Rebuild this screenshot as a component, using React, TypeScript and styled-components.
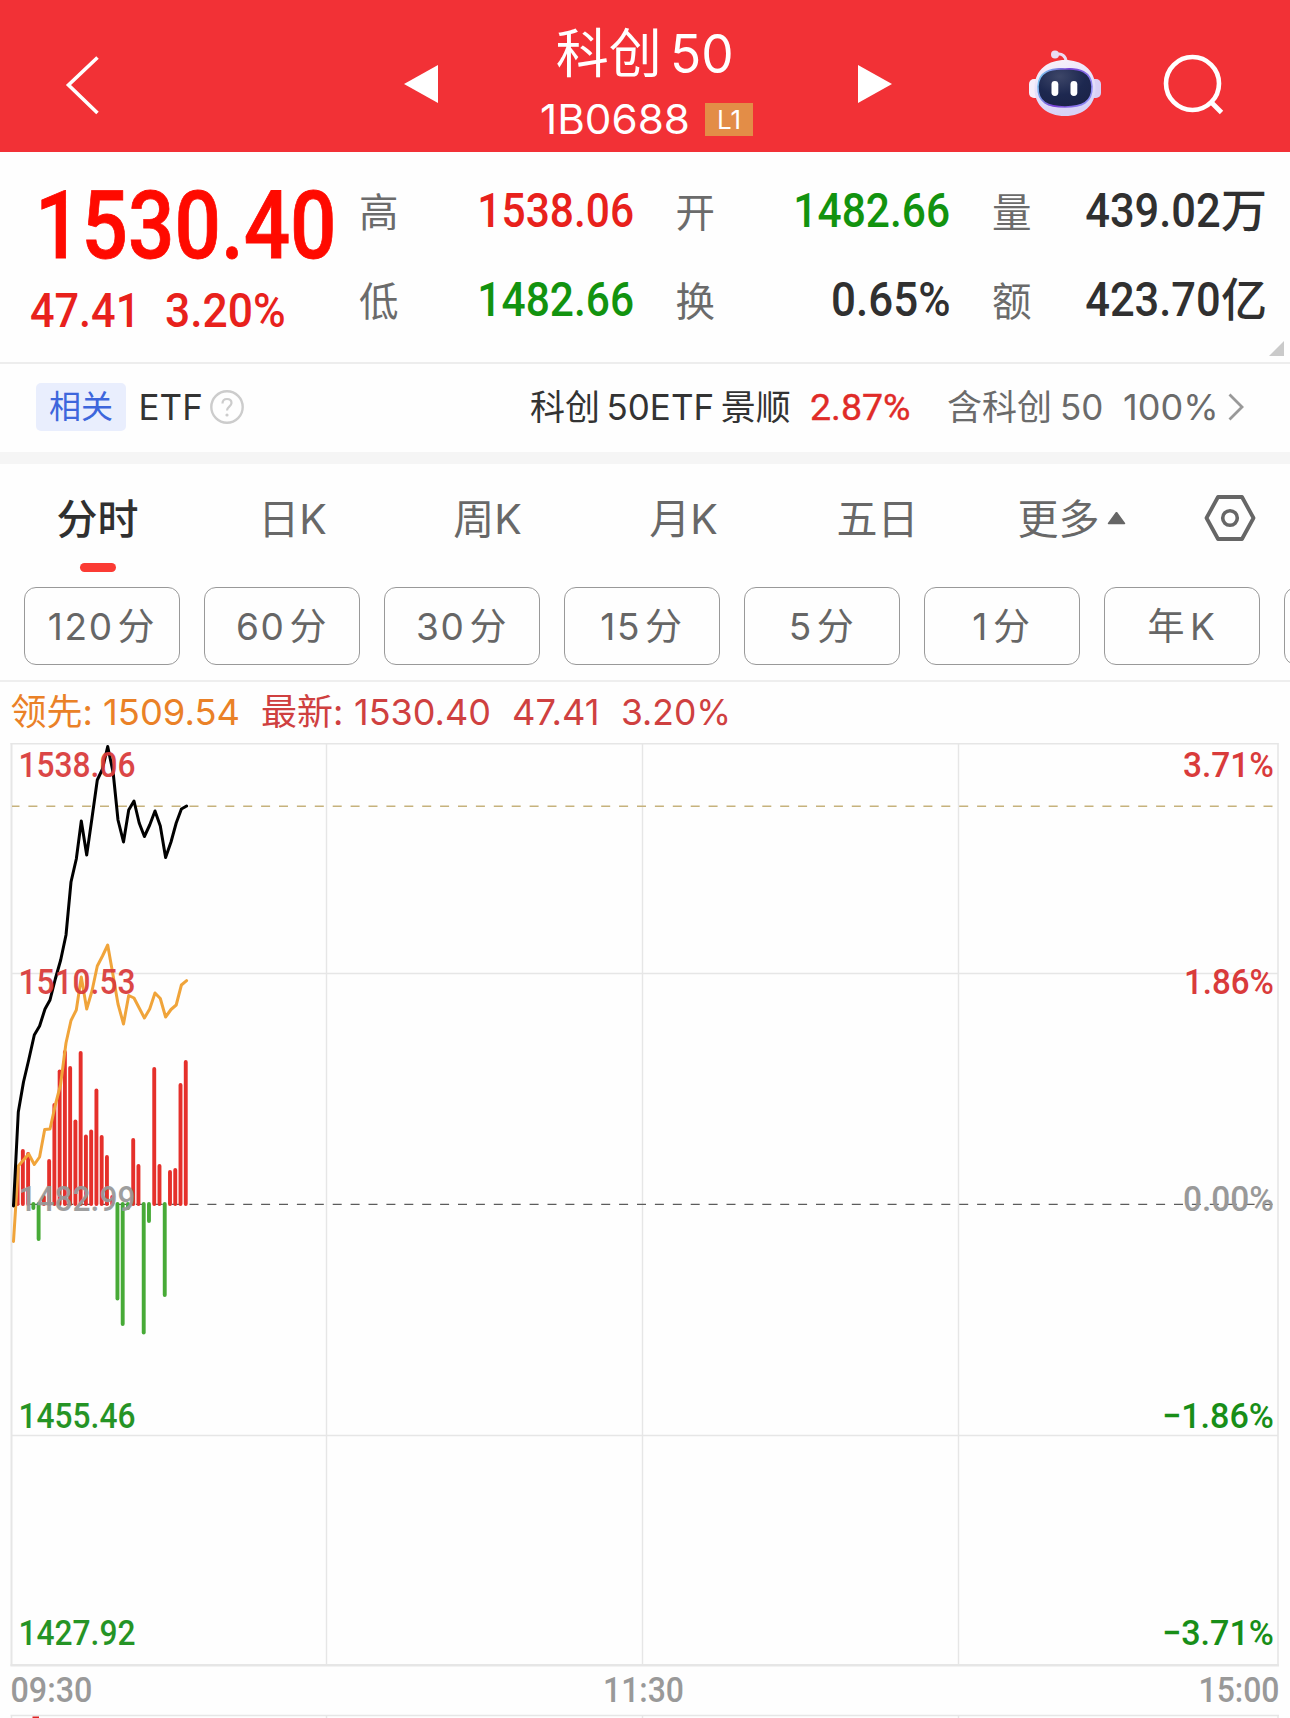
import React from "react";
import styled, { createGlobalStyle } from "styled-components";

const latin = `Inter, "Noto Sans CJK SC", sans-serif`;
const numeric = `Roboto, "Noto Sans CJK SC", sans-serif`;

const GlobalStyle = createGlobalStyle`
  *, *::before, *::after { box-sizing: border-box; }
  body {
    margin: 0;
    background: #fff;
    font-family: ${latin};
    font-variant-ligatures: none;
    overflow: hidden;
  }
  svg { display: block; }
`;

const Screen = styled.main`
  width: 1290px;
  height: 1718px;
  overflow: hidden;
  display: flex;
  flex-direction: column;
  background: #fefefe;
`;

/* Condensed lettering: squeezes glyphs horizontally, anchored on one side. */
const Squeeze = styled.span<{ $x: number; $from?: "left" | "right" | "center" }>`
  display: inline-block;
  white-space: pre;
  transform: scaleX(${(p) => p.$x});
  transform-origin: ${(p) => p.$from ?? "left"} center;
`;

/* ---------- header ---------- */

const Header = styled.header`
  height: 152px;
  flex: none;
  display: grid;
  grid-template-columns: 404px 34px 420px 34px 137px 72px 62px 1fr;
  align-items: start;
  background: #f23136;
  color: #fff;
`;

const IconSlot = styled.div<{ $top: number; $left?: number }>`
  padding: ${(p) => p.$top}px 0 0 ${(p) => p.$left ?? 0}px;
`;

const TitleBlock = styled.div`
  display: flex;
  flex-direction: column;
  align-items: center;
  padding: 27px 3px 0 0;
`;

const Title = styled.h1`
  margin: 0;
  padding-right: 2px;
  display: flex;
  gap: 8px;
  font-size: 53px;
  font-weight: 400;
  line-height: 54px;
`;

const CodeRow = styled.div`
  display: flex;
  align-items: center;
  margin-top: 16px;
  height: 44px;
`;

const Code = styled.span`
  width: 152px;
  font-size: 41px;
  line-height: 44px;
`;

const Level = styled.span`
  display: flex;
  align-items: center;
  justify-content: center;
  width: 48px;
  height: 33px;
  margin: 1px 0 0 13px;
  background: #e38d47;
  font-size: 26px;
  line-height: 33px;
`;

/* ---------- quote ---------- */

const Quote = styled.section`
  position: relative;
  flex: none;
  height: 212px;
  display: grid;
  grid-template-columns: 359px 1fr;
  border-bottom: 2px solid #ededed;
  font-family: ${numeric};
  font-weight: 500;
`;

const PriceBlock = styled.div`
  padding: 27px 0 0 30px;
`;

const Price = styled.div`
  padding-left: 5px;
  font-size: 94px;
  line-height: 94px;
  color: #ff0a00;
  -webkit-text-stroke: 0.8px #ff0a00;
`;

const Change = styled.div`
  display: grid;
  grid-template-columns: 135px auto;
  margin-top: 14px;
  font-size: 48px;
  line-height: 48px;
  color: #e8211c;
`;

const Stats = styled.div`
  display: grid;
  grid-template-columns: repeat(3, 275px);
  grid-template-rows: 48px 48px;
  gap: 41px 41.5px;
  padding-top: 35px;
`;

const Stat = styled.div`
  display: flex;
  justify-content: space-between;
  align-items: baseline;
  line-height: 48px;
`;

const StatLabel = styled.span`
  font-size: 39.5px;
  font-weight: 400;
  color: #6b6b6b;
`;

const StatValue = styled.span<{ $tone: string }>`
  font-size: 48px;
  color: ${(p) => p.$tone};
`;

const Unit = styled.span`
  font-size: 46px;
`;

const Corner = styled.i`
  position: absolute;
  right: 6px;
  bottom: 6px;
  width: 15px;
  height: 15px;
  background: #cacaca;
  clip-path: polygon(100% 0, 100% 100%, 0 100%);
`;

/* ---------- related ETF ---------- */

const Related = styled.section`
  flex: none;
  height: 100px;
  display: grid;
  grid-template-columns: 102.5px 71.5px 320px 280px 137px 176px 105px auto;
  align-items: center;
  padding: 0 0 2px 36px;
  border-bottom: 12px solid #f5f5f5;
  font-size: 35px;
  line-height: 48px;
  color: #333;
  white-space: nowrap;
`;

const Chip = styled.span`
  width: 90px;
  height: 48px;
  border-radius: 5px;
  background: #e9eefd;
  color: #3d66dc;
  font-size: 32px;
  line-height: 47px;
  text-align: center;
`;

const Mixed = styled.span<{ $tone?: string; $gap?: number }>`
  display: flex;
  align-items: baseline;
  gap: ${(p) => p.$gap ?? 8}px;
  color: ${(p) => p.$tone ?? "inherit"};
`;

const Rise = styled.span`
  font-family: ${numeric};
  font-size: 37.5px;
  color: #e02b28;
  -webkit-text-stroke: 0.4px #e02b28;
`;

/* ---------- tabs ---------- */

const Tabs = styled.nav`
  flex: none;
  height: 123px;
  display: grid;
  grid-template-columns: repeat(3, 195px) 197px 191px 197px 1fr;
  padding-top: 30px;
`;

const Tab = styled.div<{ $active?: boolean }>`
  display: flex;
  flex-direction: column;
  align-items: center;
  font-size: 41px;
  line-height: 48px;
  font-weight: ${(p) => (p.$active ? 500 : 400)};
  color: ${(p) => (p.$active ? "#303030" : "#686868")};
`;

const TabText = styled.span`
  display: flex;
  align-items: center;
  height: 48px;
  padding-top: 2px;
`;

const Underline = styled.i`
  width: 36px;
  height: 9px;
  margin-top: 21px;
  border-radius: 5px;
  background: #fb3b34;
`;

const Periods = styled.div`
  flex: none;
  height: 95px;
  display: flex;
  align-items: flex-start;
  gap: 24px;
  padding-left: 24px;
  border-bottom: 2px solid #eee;
  overflow: hidden;
`;

const Period = styled.button`
  flex: none;
  width: 156px;
  height: 78px;
  padding: 2px 0 0;
  display: flex;
  align-items: center;
  justify-content: center;
  gap: 4px;
  border: 1.5px solid #999;
  border-radius: 12px;
  background: none;
  font: 400 37px/48px ${latin};
  letter-spacing: 1.6px;
  color: #666;
`;

/* ---------- legend and chart ---------- */

const Legend = styled.div`
  flex: none;
  height: 61px;
  display: grid;
  grid-template-columns: 92.5px 158px 93px 158px 109px auto;
  padding: 8px 0 0 10.5px;
  font-size: 36px;
  line-height: 44px;
  white-space: nowrap;
`;

const LegendText = styled.span<{ $tone: string }>`
  color: ${(p) => p.$tone};
`;

const AxisText = styled.text`
  font-family: ${numeric};
  font-size: 35.5px;
  font-weight: 500;
`;

const RED = "#d93b3b";
const GREEN = "#188e18";
const GREY = "#999";

const priceLine: [number, number][] = [
  [13.5, 1206], [18.3, 1112], [23.5, 1082], [28.7, 1060], [34.3, 1035], [39.6, 1026],
  [45, 1009], [50, 1000], [55.3, 979], [60.7, 960], [66, 935], [71, 882], [76.3, 859],
  [81.3, 821], [86.7, 855], [92, 818], [97.3, 780], [102.5, 769], [107.7, 746.5],
  [113.2, 773], [118, 820], [123.5, 842], [128.7, 810], [134, 801], [139.2, 823],
  [144.4, 836.5], [149.7, 825], [155, 811], [160.3, 826], [165.6, 857.5], [171, 842],
  [176.2, 823], [181.4, 809], [186.6, 806],
];

const leadLine: [number, number][] = [
  [13.5, 1241.5], [18.3, 1166], [23.5, 1160], [28.7, 1154], [34.3, 1164.5], [39.6, 1157],
  [44.7, 1129.5], [50, 1129], [55.3, 1105], [60.5, 1085], [66, 1043], [71, 1020.5],
  [76.3, 1010], [81.3, 977], [86.7, 1009], [92, 991], [97.3, 966], [102.5, 956],
  [107.7, 945], [113, 975], [118, 1004], [123.5, 1024], [128.7, 995.5], [134, 998],
  [139.2, 1008], [144.4, 1018], [149.7, 1009], [155, 993], [160.3, 998.5],
  [165.6, 1017], [171, 1009.5], [176.2, 1005], [181.4, 985], [186.6, 980.7],
];

/* End of each minute bar; values below the zero line are drawn green. */
const bars = [
  1168, 1151, 1154, 1208, 1239, 1197, 1161, 1105, 1071.5, 1052, 1068, 1121.5, 1053,
  1136.5, 1131.5, 1090.5, 1137, 1157, 1197, 1298.5, 1324, 1208, 1140, 1166, 1332.5,
  1221, 1069, 1166, 1295, 1172, 1170, 1085, 1062,
];

const ZERO = 1204;
const toPoints = (line: [number, number][]) => line.map((p) => p.join(",")).join(" ");

const leftAxis: [string, number, string][] = [
  ["1538.06", 777, RED],
  ["1510.53", 994, RED],
  ["1482.99", 1211, GREY],
  ["1455.46", 1428, GREEN],
  ["1427.92", 1645, GREEN],
];

const rightAxis: [string, number, string, number][] = [
  ["3.71%", 777, RED, 91],
  ["1.86%", 994, RED, 90],
  ["0.00%", 1211, GREY, 91],
  ["−1.86%", 1428, GREEN, 112],
  ["−3.71%", 1645, GREEN, 112],
];

function Chart() {
  return (
    <svg width="1290" height="975" viewBox="0 743 1290 975">
      <g stroke="#e6e6e6" fill="none">
        <path d="M326.5 743V1665M642.5 743V1665M958.5 743V1665M11 973.5H1278M11 1435.5H1278" strokeWidth="1.4" />
        <path d="M10.5 743.8H1278.5" strokeWidth="1.6" />
        <path d="M1278 743V1666" strokeWidth="1.6" />
        <path d="M11.5 743V1666" strokeWidth="2" />
        <path d="M10.5 1665.3H1279" strokeWidth="2.4" />
        <path d="M10.5 1715.5H1279M11.5 1715V1718M326.5 1715V1718M642.5 1715V1718M958.5 1715V1718M1278 1715V1718" strokeWidth="1.4" />
      </g>
      <path d="M32.5 1718V1716.5H39V1718Z" fill="#d22" />
      <path d="M12 806.3H1278" stroke="#c6b27c" strokeWidth="1.6" strokeDasharray="9 8.9" strokeDashoffset="1.5" />
      <path d="M12 1204.4H1278" stroke="#5c5c5c" strokeWidth="1.3" strokeDasharray="9 8.9" strokeDashoffset="1.5" />
      <g strokeWidth="3.9" strokeLinecap="round">
        {bars.map((end, i) => {
          const x = 17.6 + i * 5.255;
          return (
            <line
              key={i}
              x1={x}
              x2={x}
              y1={ZERO}
              y2={end}
              stroke={end > ZERO ? "#47aa37" : "#e5302b"}
            />
          );
        })}
      </g>
      <polyline points={toPoints(leadLine)} fill="none" stroke="#f0a43a" strokeWidth="3" strokeLinejoin="round" strokeLinecap="round" />
      <polyline points={toPoints(priceLine)} fill="none" stroke="#000" strokeWidth="3" strokeLinejoin="round" strokeLinecap="round" />
      {leftAxis.map(([label, y, tone]) => (
        <AxisText key={label} x="18.5" y={y} fill={tone} opacity={0.94} textLength="117" lengthAdjust="spacingAndGlyphs">
          {label}
        </AxisText>
      ))}
      {rightAxis.map(([label, y, tone, w]) => (
        <AxisText key={label} x={1274 - w} y={y} fill={tone} textLength={w} lengthAdjust="spacingAndGlyphs">
          {label}
        </AxisText>
      ))}
      <AxisText x="10.5" y="1702" fill={GREY} textLength="82" lengthAdjust="spacingAndGlyphs">09:30</AxisText>
      <AxisText x="603" y="1702" fill={GREY} textLength="81" lengthAdjust="spacingAndGlyphs">11:30</AxisText>
      <AxisText x="1198.5" y="1702" fill={GREY} textLength="81" lengthAdjust="spacingAndGlyphs">15:00</AxisText>
    </svg>
  );
}

function Robot() {
  return (
    <svg width="72" height="68" viewBox="0 0 72 68">
      <defs>
        <linearGradient id="shell" x1="0" y1="0" x2="0.3" y2="1">
          <stop offset="0" stopColor="#fbf3fb" />
          <stop offset="0.55" stopColor="#e6e0fa" />
          <stop offset="1" stopColor="#d8d2f7" />
        </linearGradient>
        <linearGradient id="rim" x1="0" y1="0.3" x2="1" y2="0.6">
          <stop offset="0" stopColor="#7cc4f0" />
          <stop offset="0.45" stopColor="#7a3fd6" />
          <stop offset="1" stopColor="#8d8cf5" />
        </linearGradient>
        <radialGradient id="visor" cx="0.4" cy="0.2" r="0.8">
          <stop offset="0" stopColor="#3d4668" />
          <stop offset="0.6" stopColor="#1d2850" />
          <stop offset="1" stopColor="#1b2348" />
        </radialGradient>
      </defs>
      <path d="M27 4.5C33 3 37 6 37 12" fill="none" stroke="#ecdcf2" strokeWidth="3" strokeLinecap="round" />
      <circle cx="26" cy="4.600" r="4" fill="#eadcf4" />
      <rect x="0" y="29" width="12" height="19" rx="5" fill="#f5eefb" />
      <rect x="60" y="29" width="12" height="19" rx="5" fill="#d8d0f6" />
      <path d="M36 10C52 10 66 18.500 66.500 37.500C67 55.500 54 66 36 66C18 66 5 55.500 5.500 37.500C6 18.500 20 10 36 10Z" fill="url(#shell)" />
      <path d="M36 19C50 18 62.500 21.500 63 36.500C63.500 52.500 53 57 36 57C19 57 8.500 52.500 9 36.500C9.500 21.500 22 18 36 19Z" fill="url(#visor)" stroke="url(#rim)" strokeWidth="1.6" />
      <rect x="22.500" y="31" width="6.800" height="15" rx="3.4" fill="#fff" />
      <rect x="41.500" y="31" width="6.800" height="15" rx="3.4" fill="#fff" />
    </svg>
  );
}

const periods: [string, string][] = [
  ["120", "分"], ["60", "分"], ["30", "分"], ["15", "分"], ["5", "分"], ["1", "分"], ["年", "K"], ["", ""],
];

export default function App() {
  return (
    <Screen>
      <GlobalStyle />
      <Header>
        <IconSlot $top={54} $left={64}>
          <svg width="38" height="62" viewBox="0 0 38 62">
            <path d="M33.500 3.500L4.500 31L33.500 59" fill="none" stroke="#fff" strokeWidth="3.6" />
          </svg>
        </IconSlot>
        <IconSlot $top={65}>
          <svg width="34" height="38"><path d="M34 0V38L0 19Z" fill="#fff" /></svg>
        </IconSlot>
        <TitleBlock>
          <Title><span>科创</span><Squeeze $x={0.97}>50</Squeeze></Title>
          <CodeRow>
            <Code><Squeeze $x={1.03}>1B0688</Squeeze></Code>
            <Level>L1</Level>
          </CodeRow>
        </TitleBlock>
        <IconSlot $top={65}>
          <svg width="34" height="38"><path d="M0 0V38L34 19Z" fill="#fff" /></svg>
        </IconSlot>
        <span />
        <IconSlot $top={50}><Robot /></IconSlot>
        <span />
        <IconSlot $top={54}>
          <svg width="62" height="62" viewBox="1163 54 62 62">
            <circle cx="1192.500" cy="83.500" r="26.500" fill="none" stroke="#fff" strokeWidth="4.600" />
            <path d="M1210.500 101.500L1221.500 112.500" stroke="#fff" strokeWidth="4.800" />
          </svg>
        </IconSlot>
      </Header>

      <Quote>
        <PriceBlock>
          <Price><Squeeze $x={0.87}>1530.40</Squeeze></Price>
          <Change>
            <Squeeze $x={0.9}>47.41</Squeeze>
            <Squeeze $x={0.925}>3.20%</Squeeze>
          </Change>
        </PriceBlock>
        <Stats>
          <Stat><StatLabel>高</StatLabel><StatValue $tone="#e8211c"><Squeeze $x={0.885} $from="right">1538.06</Squeeze></StatValue></Stat>
          <Stat><StatLabel>开</StatLabel><StatValue $tone="#12930f"><Squeeze $x={0.885} $from="right">1482.66</Squeeze></StatValue></Stat>
          <Stat><StatLabel>量</StatLabel><StatValue $tone="#303030"><Squeeze $x={0.905} $from="right">439.02</Squeeze><Unit>万</Unit></StatValue></Stat>
          <Stat><StatLabel>低</StatLabel><StatValue $tone="#12930f"><Squeeze $x={0.885} $from="right">1482.66</Squeeze></StatValue></Stat>
          <Stat><StatLabel>换</StatLabel><StatValue $tone="#303030"><Squeeze $x={0.915} $from="right">0.65%</Squeeze></StatValue></Stat>
          <Stat><StatLabel>额</StatLabel><StatValue $tone="#303030"><Squeeze $x={0.905} $from="right">423.70</Squeeze><Unit>亿</Unit></StatValue></Stat>
        </Stats>
        <Corner />
      </Quote>

      <Related>
        <Chip>相关</Chip>
        <span>ETF</span>
        <svg width="34" height="34" viewBox="0 0 34 34">
          <circle cx="17" cy="17" r="15.700" fill="none" stroke="#ccc" strokeWidth="2.400" />
          <path d="M12.500 13.500C12.500 10.500 14.500 9 17 9C19.800 9 21.500 10.800 21.500 13C21.500 16.500 17 16.800 17 20.500" fill="none" stroke="#ccc" strokeWidth="2.200" />
          <circle cx="17" cy="25" r="1.600" fill="#ccc" />
        </svg>
        <Mixed $gap={6.5}><span>科创</span><span>50ETF</span><span>景顺</span></Mixed>
        <Rise><Squeeze $x={1}>2.87%</Squeeze></Rise>
        <Mixed $tone="#6b6b6b"><span>含科创</span><span>50</span></Mixed>
        <Mixed $tone="#6b6b6b"><Squeeze $x={1.03}>100%</Squeeze></Mixed>
        <svg width="17" height="28" viewBox="0 0 17 28">
          <path d="M1.500 1.500L14 14L1.500 26.500" fill="none" stroke="#999" strokeWidth="2.800" />
        </svg>
      </Related>

      <Tabs>
        <Tab $active><TabText>分时</TabText><Underline /></Tab>
        <Tab><TabText>日K</TabText></Tab>
        <Tab><TabText>周K</TabText></Tab>
        <Tab><TabText>月K</TabText></Tab>
        <Tab><TabText>五日</TabText></Tab>
        <Tab>
          <TabText>
            更多
            <svg width="26" height="14" viewBox="-7 1 26 14"><path d="M9.500 1.500L17.500 12.500H1.500Z" fill="#666" stroke="#666" strokeWidth="1.500" strokeLinejoin="round" /></svg>
          </TabText>
        </Tab>
        <Tab>
          <svg width="52" height="48" viewBox="0 0 52 48">
            <path d="M14 3H38L49.500 24L38 45H14L2.500 24Z" fill="none" stroke="#666" strokeWidth="3.800" strokeLinejoin="round" />
            <circle cx="26" cy="24" r="7.300" fill="none" stroke="#666" strokeWidth="3.600" />
          </svg>
        </Tab>
      </Tabs>

      <Periods>
        {periods.map(([a, b], i) => (
          <Period key={i}><span>{a}</span><span>{b}</span></Period>
        ))}
      </Periods>

      <Legend>
        <LegendText $tone="#ea8127">领先:</LegendText>
        <LegendText $tone="#ea8127"><Squeeze $x={1.01}>1509.54</Squeeze></LegendText>
        <LegendText $tone="#cf4040">最新:</LegendText>
        <LegendText $tone="#cf4040">1530.40</LegendText>
        <LegendText $tone="#cf4040"><Squeeze $x={1.01}>47.41</Squeeze></LegendText>
        <LegendText $tone="#cf4040"><Squeeze $x={0.985}>3.20%</Squeeze></LegendText>
      </Legend>
      <Chart />
    </Screen>
  );
}
